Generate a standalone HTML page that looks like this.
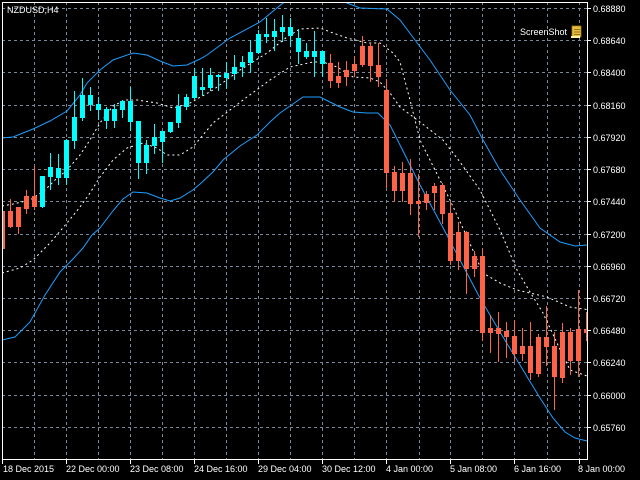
<!DOCTYPE html>
<html><head><meta charset="utf-8"><style>
html,body{margin:0;padding:0;background:#000;}
svg{display:block}
text{font-family:"Liberation Sans",sans-serif;font-size:9px;fill:#fff}
</style></head><body>
<svg width="640" height="480" viewBox="0 0 640 480" xmlns="http://www.w3.org/2000/svg">
<rect width="640" height="480" fill="#000"/>
<g stroke="#778899" stroke-width="1" stroke-dasharray="3,3" shape-rendering="crispEdges">
<path d="M2 8.5H587M2 40.5H587M2 72.5H587M2 105.5H587M2 137.5H587M2 169.5H587M2 201.5H587M2 234.5H587M2 266.5H587M2 298.5H587M2 330.5H587M2 362.5H587M2 395.5H587M2 427.5H587"/>
<path d="M34.5 2V459M66.5 2V459M98.5 2V459M130.5 2V459M162.5 2V459M194.5 2V459M226.5 2V459M258.5 2V459M290.5 2V459M322.5 2V459M354.5 2V459M386.5 2V459M419.5 2V459M450.5 2V459M482.5 2V459M514.5 2V459M547.5 2V459M579.5 2V459"/>
</g>
<defs><clipPath id="c"><rect x="3" y="3" width="584" height="456"/></clipPath></defs>
<g clip-path="url(#c)" fill="none">
<polyline stroke="#1e9fff" stroke-width="1" points="2,138 13,137 33,129 50,121 67,111 80,95 87,83 100,70 113,60 133,53 147,55 160,61 173,66 187,65 200,59 207,55 230,38 260,22 283,3 300,-3 330,-3 347,3 360,8 387,9 400,20 415,40 430,60 450,90 470,115 483,140 500,170 520,200 540,228 560,242 575,246 587,245"/>
<polyline stroke="#1e9fff" stroke-width="1" points="2,340 15,337 30,322 45,295 60,272 72,260 83,248 92,235 100,228 112,212 123,199 133,192 147,193 160,198 170,201 180,198 193,190 200,184 213,172 223,160 240,146 257,135 270,122 280,113 290,106 303,97 320,97 340,107 353,112 367,113 378,113 390,125 400,145 420,185 440,222 460,260 480,298 500,332 520,365 540,398 553,418 565,432 575,438 587,441"/>
<polyline stroke="#fff" stroke-width="1" stroke-dasharray="2,3" points="2,206 13,204 30,200 45,190 55,180 67,170 80,155 88,143 100,123 113,106 125,100 137,100 157,103 173,108 190,103 213,90 240,70 267,53 287,37 300,29 320,28 333,33 347,38 367,43 380,43 393,53 400,62 410,100 420,140 435,170 450,200 467,237 483,273 500,283 517,290 547,297 570,307 590,310"/>
<polyline stroke="#fff" stroke-width="1" stroke-dasharray="2,3" points="2,273 20,268 33,260 50,243 67,223 80,207 90,193 100,177 113,160 127,148 143,143 157,148 167,155 180,155 193,147 213,123 247,97 270,80 290,67 313,62 323,62 337,67 353,77 370,78 380,82 390,93 400,107 420,122 443,140 460,162 480,190 500,230 517,270 530,292 543,313 557,343 570,370 587,376"/>
</g>
<g clip-path="url(#c)" shape-rendering="crispEdges" fill="#ff6347">
<rect x="2" y="211" width="1" height="39"/><rect x="0" y="211" width="5" height="38"/>
<rect x="10" y="199" width="1" height="29"/><rect x="8" y="211" width="5" height="16"/>
<rect x="18" y="207" width="1" height="27"/><rect x="16" y="207" width="5" height="20"/>
<rect x="26" y="190" width="1" height="24"/><rect x="24" y="196" width="5" height="13"/>
<rect x="34" y="166" width="1" height="44"/><rect x="32" y="196" width="5" height="11"/>
<rect x="330" y="54" width="1" height="34"/><rect x="328" y="63" width="5" height="18"/>
<rect x="338" y="62" width="1" height="26"/><rect x="336" y="76" width="5" height="7"/>
<rect x="346" y="61" width="1" height="25"/><rect x="344" y="70" width="5" height="7"/>
<rect x="354" y="56" width="1" height="21"/><rect x="352" y="64" width="5" height="7"/>
<rect x="362" y="36" width="1" height="31"/><rect x="360" y="46" width="5" height="19"/>
<rect x="370" y="43" width="1" height="39"/><rect x="368" y="46" width="5" height="20"/>
<rect x="378" y="43" width="1" height="44"/><rect x="376" y="65" width="5" height="12"/>
<rect x="386" y="79" width="1" height="109"/><rect x="384" y="90" width="5" height="83"/>
<rect x="394" y="166" width="1" height="36"/><rect x="392" y="172" width="5" height="19"/>
<rect x="402" y="162" width="1" height="40"/><rect x="400" y="173" width="5" height="18"/>
<rect x="410" y="159" width="1" height="56"/><rect x="408" y="173" width="5" height="31"/>
<rect x="418" y="174" width="1" height="63"/><rect x="416" y="201" width="5" height="3"/>
<rect x="426" y="191" width="1" height="19"/><rect x="424" y="194" width="5" height="9"/>
<rect x="434" y="183" width="1" height="27"/><rect x="432" y="186" width="5" height="7"/>
<rect x="442" y="183" width="1" height="41"/><rect x="440" y="185" width="5" height="29"/>
<rect x="450" y="202" width="1" height="63"/><rect x="448" y="213" width="5" height="48"/>
<rect x="458" y="222" width="1" height="48"/><rect x="456" y="232" width="5" height="29"/>
<rect x="466" y="231" width="1" height="63"/><rect x="464" y="232" width="5" height="37"/>
<rect x="474" y="251" width="1" height="26"/><rect x="472" y="256" width="5" height="13"/>
<rect x="482" y="249" width="1" height="92"/><rect x="480" y="256" width="5" height="77"/>
<rect x="490" y="315" width="1" height="38"/><rect x="488" y="328" width="5" height="5"/>
<rect x="498" y="312" width="1" height="50"/><rect x="496" y="328" width="5" height="6"/>
<rect x="506" y="322" width="1" height="36"/><rect x="504" y="331" width="5" height="6"/>
<rect x="514" y="320" width="1" height="42"/><rect x="512" y="336" width="5" height="18"/>
<rect x="522" y="328" width="1" height="33"/><rect x="520" y="346" width="5" height="8"/>
<rect x="530" y="322" width="1" height="58"/><rect x="528" y="346" width="5" height="27"/>
<rect x="538" y="334" width="1" height="43"/><rect x="536" y="337" width="5" height="37"/>
<rect x="546" y="306" width="1" height="60"/><rect x="544" y="337" width="5" height="10"/>
<rect x="554" y="332" width="1" height="78"/><rect x="552" y="346" width="5" height="31"/>
<rect x="562" y="323" width="1" height="60"/><rect x="560" y="332" width="5" height="46"/>
<rect x="570" y="328" width="1" height="47"/><rect x="568" y="332" width="5" height="29"/>
<rect x="578" y="290" width="1" height="87"/><rect x="576" y="329" width="5" height="32"/>
<rect x="586" y="312" width="1" height="29"/><rect x="584" y="329" width="5" height="4"/>
</g>
<g clip-path="url(#c)" shape-rendering="crispEdges" fill="#00ffff">
<rect x="42" y="176" width="1" height="32"/><rect x="40" y="176" width="5" height="31"/>
<rect x="50" y="153" width="1" height="37"/><rect x="48" y="167" width="5" height="10"/>
<rect x="58" y="154" width="1" height="31"/><rect x="56" y="168" width="5" height="10"/>
<rect x="66" y="139" width="1" height="46"/><rect x="64" y="140" width="5" height="38"/>
<rect x="74" y="91" width="1" height="58"/><rect x="72" y="117" width="5" height="24"/>
<rect x="82" y="78" width="1" height="43"/><rect x="80" y="95" width="5" height="23"/>
<rect x="90" y="87" width="1" height="24"/><rect x="88" y="95" width="5" height="10"/>
<rect x="98" y="97" width="1" height="23"/><rect x="96" y="104" width="5" height="6"/>
<rect x="106" y="107" width="1" height="22"/><rect x="104" y="109" width="5" height="12"/>
<rect x="114" y="104" width="1" height="24"/><rect x="112" y="109" width="5" height="12"/>
<rect x="122" y="100" width="1" height="18"/><rect x="120" y="101" width="5" height="9"/>
<rect x="130" y="87" width="1" height="44"/><rect x="128" y="101" width="5" height="21"/>
<rect x="138" y="121" width="1" height="58"/><rect x="136" y="121" width="5" height="42"/>
<rect x="146" y="140" width="1" height="34"/><rect x="144" y="145" width="5" height="18"/>
<rect x="154" y="124" width="1" height="30"/><rect x="152" y="137" width="5" height="9"/>
<rect x="162" y="131" width="1" height="32"/><rect x="160" y="131" width="5" height="11"/>
<rect x="170" y="122" width="1" height="11"/><rect x="168" y="122" width="5" height="10"/>
<rect x="178" y="94" width="1" height="34"/><rect x="176" y="106" width="5" height="17"/>
<rect x="186" y="94" width="1" height="16"/><rect x="184" y="97" width="5" height="10"/>
<rect x="194" y="68" width="1" height="31"/><rect x="192" y="76" width="5" height="22"/>
<rect x="202" y="68" width="1" height="28"/><rect x="200" y="87" width="5" height="3"/>
<rect x="210" y="68" width="1" height="23"/><rect x="208" y="75" width="5" height="13"/>
<rect x="218" y="74" width="1" height="17"/><rect x="216" y="75" width="5" height="2"/>
<rect x="226" y="62" width="1" height="27"/><rect x="224" y="73" width="5" height="5"/>
<rect x="234" y="55" width="1" height="25"/><rect x="232" y="67" width="5" height="7"/>
<rect x="242" y="56" width="1" height="21"/><rect x="240" y="62" width="5" height="5"/>
<rect x="250" y="40" width="1" height="33"/><rect x="248" y="52" width="5" height="11"/>
<rect x="258" y="30" width="1" height="24"/><rect x="256" y="34" width="5" height="19"/>
<rect x="266" y="18" width="1" height="25"/><rect x="264" y="34" width="5" height="3"/>
<rect x="274" y="19" width="1" height="32"/><rect x="272" y="31" width="5" height="6"/>
<rect x="282" y="15" width="1" height="27"/><rect x="280" y="27" width="5" height="5"/>
<rect x="290" y="18" width="1" height="29"/><rect x="288" y="27" width="5" height="9"/>
<rect x="298" y="29" width="1" height="35"/><rect x="296" y="38" width="5" height="14"/>
<rect x="306" y="43" width="1" height="16"/><rect x="304" y="51" width="5" height="6"/>
<rect x="314" y="31" width="1" height="46"/><rect x="312" y="51" width="5" height="6"/>
<rect x="322" y="51" width="1" height="26"/><rect x="320" y="51" width="5" height="13"/>
</g>
<g stroke="#fff" stroke-width="1" shape-rendering="crispEdges">
<path d="M2.5 2V459.5M2 2.5H587.5M587.5 2V460M2 459.5H588"/>
<path d="M587 8.5H591M587 40.5H591M587 72.5H591M587 105.5H591M587 137.5H591M587 169.5H591M587 201.5H591M587 234.5H591M587 266.5H591M587 298.5H591M587 330.5H591M587 362.5H591M587 395.5H591M587 427.5H591"/>
<path d="M2.5 459V464M66.5 459V464M130.5 459V464M194.5 459V464M258.5 459V464M322.5 459V464M386.5 459V464M450.5 459V464M514.5 459V464M579.5 459V464"/>
</g>
<g>
<text x="593" y="12">0.68880</text><text x="593" y="44">0.68640</text><text x="593" y="76">0.68400</text>
<text x="593" y="109">0.68160</text><text x="593" y="141">0.67920</text><text x="593" y="173">0.67680</text>
<text x="593" y="205">0.67440</text><text x="593" y="238">0.67200</text><text x="593" y="270">0.66960</text>
<text x="593" y="302">0.66720</text><text x="593" y="334">0.66480</text><text x="593" y="366">0.66240</text>
<text x="593" y="399">0.66000</text><text x="593" y="431">0.65760</text>
<text x="3" y="472">18 Dec 2015</text><text x="66" y="472">22 Dec 00:00</text><text x="130" y="472">23 Dec 08:00</text>
<text x="194" y="472">24 Dec 16:00</text><text x="258" y="472">29 Dec 04:00</text><text x="322" y="472">30 Dec 12:00</text>
<text x="386" y="472">4 Jan 00:00</text><text x="450" y="472">5 Jan 08:00</text><text x="514" y="472">6 Jan 16:00</text>
<text x="578" y="472">8 Jan 00:00</text>
<text x="7" y="13">NZDUSD,H4</text>
<text x="520" y="35">ScreenShot</text>
</g>
<g>
<rect x="572" y="26" width="9" height="11" fill="#e8c040" stroke="#a07810" stroke-width="0.8"/>
<path d="M574 29.5H580M574 32H580M574 34.5H580" stroke="#7a5a10" stroke-width="0.8"/>
<rect x="571" y="36" width="9" height="2" fill="#fff3b0"/>
</g>
</svg>
</body></html>
